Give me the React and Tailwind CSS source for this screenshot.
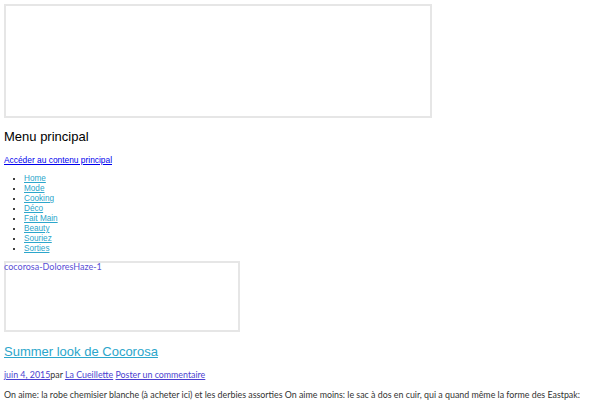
import React from 'react';

const menu = ['Home', 'Mode', 'Cooking', 'Déco', 'Fait Main', 'Beauty', 'Souriez', 'Sorties'];

const App = () => {
    return (
        <div className="bg-white min-h-[400px] w-[600px] overflow-hidden px-1 pt-1" style={{ fontFamily: '"Liberation Sans", Arial, sans-serif' }}>
            <div className="w-[428px] h-[114px] border-2 border-[#e6e6e6] bg-white" />

            <h2 className="text-[13px] leading-[16px] text-black mt-[11px]">Menu principal</h2>

            <a href="#content" className="block text-[8.4px] leading-[10px] text-[#0000ee] underline mt-[10px]">
                Accéder au contenu principal
            </a>

            <ul className="list-disc pl-5 mt-[9px] text-[8.2px] leading-[10px]">
                {menu.map((item) => (
                    <li key={item}>
                        <a href="#" className="text-[#2ba6cb] underline">{item}</a>
                    </li>
                ))}
            </ul>

            <div className="w-[236px] h-[71px] border-2 border-[#e6e6e6] mt-[7px]">
                <div className="-ml-[2px] -mt-[2px] text-[#5b50d6] text-[9px] leading-[11px]" style={{ fontFamily: 'Lato, sans-serif' }}>
                    cocorosa-DoloresHaze-1
                </div>
            </div>

            <h1 className="text-[13px] leading-[16px] mt-[12px]">
                <a href="#" className="text-[#2ba6cb] underline">Summer look de Cocorosa</a>
            </h1>

            <div className="text-[8.85px] leading-[11px] mt-[9px] text-[#333]" style={{ fontFamily: 'Lato, sans-serif' }}>
                <p>
                    <a href="#" className="text-[#4b3fd1] underline">juin 4, 2015</a>par{' '}
                    <a href="#" className="text-[#4b3fd1] underline">La Cueillette</a>{' '}
                    <a href="#" className="text-[#4b3fd1] underline">Poster un commentaire</a>
                </p>
                <p className="mt-[9px] whitespace-nowrap">
                    On aime: la robe chemisier blanche (à acheter ici) et les derbies assorties On aime moins: le sac à dos en cuir, qui a quand même la forme des Eastpak:
                </p>
            </div>
        </div>
    );
};

export default App;
